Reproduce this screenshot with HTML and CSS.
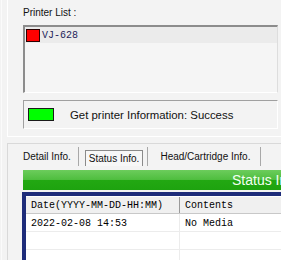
FILE: index.html
```html
<!DOCTYPE html>
<html>

<head>
    <title>Printer Status</title>
    <link rel="stylesheet" href="styles.css">
</head>

<body>
    <div class="window">
        <div class="printer-panel">
            <div class="panel-label">Printer List :</div>
            <div class="printer-list">
                <div class="printer-item">
                    <span class="swatch red"></span>
                    <span class="printer-name">VJ-628</span>
                </div>
            </div>
            <div class="status-box">
                <span class="swatch green"></span>
                <span class="status-text">Get printer Information: Success</span>
            </div>
        </div>

        <div class="info-panel">
            <div class="tabs">
                <div class="tab first">Detail Info.</div>
                <div class="tab-sep"></div>
                <div class="tab active">Status Info.</div>
                <div class="tab-sep"></div>
                <div class="tab">Head/Cartridge Info.</div>
                <div class="tab-sep"></div>
            </div>
            <div class="banner">Status Information</div>
            <div class="log-frame">
                <table class="log-table">
                    <tr>
                        <th class="col-date">Date(YYYY-MM-DD-HH:MM)</th>
                        <th>Contents</th>
                    </tr>
                    <tr>
                        <td>2022-02-08 14:53</td>
                        <td>No Media</td>
                    </tr>
                    <tr>
                        <td></td>
                        <td></td>
                    </tr>
                    <tr>
                        <td></td>
                        <td></td>
                    </tr>
                </table>
            </div>
        </div>
    </div>
</body>

</html>
```

FILE: styles.css
```css
body {
    margin: 0;
    padding: 0;
    background: #f3f3f3;
    font-family: "Liberation Sans", Arial, sans-serif;
    color: #000;
    overflow: hidden;
}

.window {
    width: 281px;
    height: 260px;
    overflow: hidden;
    border-left: 1px solid #fbfbfb;
    margin-left: 1px;
    box-sizing: border-box;
}

.printer-panel {
    margin-left: 5px;
    padding: 6px 0 7px 15px;
    border-left: 1px solid #ffffff;
    border-bottom: 1px solid #ffffff;
}

.panel-label {
    font-size: 10px;
    line-height: 13px;
    height: 13px;
    margin-bottom: 6px;
    color: #111;
}

.printer-list {
    width: 255px;
    height: 68px;
    box-sizing: border-box;
    background: #f5f5f5;
    border-top: 2px solid #8c8c8c;
    border-left: 2px solid #8c8c8c;
    border-right: 1px solid #dddddd;
    border-bottom: 1px solid #ffffff;
}

.printer-item {
    display: flex;
    align-items: center;
    height: 16px;
    background: #ebebeb;
}

.swatch {
    display: inline-block;
    box-sizing: border-box;
    border: 1px solid #2a0000;
}

.swatch.red {
    width: 14px;
    height: 13px;
    margin-left: 1px;
    background: #ff0000;
}

.printer-name {
    margin-left: 2px;
    font-family: "Liberation Mono", monospace;
    font-size: 10px;
    color: #1e1e5a;
}

.status-box {
    display: flex;
    align-items: center;
    width: 255px;
    height: 29px;
    margin-top: 7px;
    box-sizing: border-box;
    padding-left: 4px;
    border-top: 1px solid #a0a0a0;
    border-left: 1px solid #a0a0a0;
    border-right: 1px solid #ffffff;
    border-bottom: 1px solid #ffffff;
}

.swatch.green {
    width: 26px;
    height: 13px;
    border-color: #1a1a1a;
    background: #00ff00;
}

.status-text {
    margin-left: 16px;
    font-size: 11.4px;
    color: #111;
}

.info-panel {
    margin-top: 6px;
    margin-left: 5px;
    padding: 3px 0 0 15px;
    border-top: 1px solid #d9d9d9;
    border-left: 1px solid #d9d9d9;
    width: 420px;
}

.tabs {
    display: flex;
    align-items: stretch;
    height: 19px;
    font-size: 10px;
}

.tab {
    display: flex;
    align-items: center;
    padding: 0 3px;
    color: #111;
}

.tab.first {
    padding-left: 0;
    margin-right: 4px;
}

.tab.active {
    margin: 3px 4px 0 6px;
    border: 1px solid #8a8a8a;
    border-bottom: none;
    background: #f7f7f7;
}

.tab-sep {
    width: 1px;
    background: #a8a8a8;
}

.tab-sep + .tab:not(.active) {
    margin-left: 9px;
    margin-right: 7px;
}

.banner {
    height: 20px;
    margin-top: 4px;
    padding-left: 209px;
    background: linear-gradient(#6ccc5c, #4fbe3f 48%, #22a812 52%, #1ea30f);
    color: #f4fff2;
    font-size: 14px;
    line-height: 20px;
}

.log-frame {
    margin-top: 2px;
    margin-left: -1px;
    border: 4px solid #1e2c7a;
    background: #ffffff;
    height: 80px;
}

.log-table {
    border-collapse: collapse;
    width: 100%;
    font-family: "Liberation Mono", monospace;
    font-size: 10px;
    margin-top: 1px;
}

.log-table th {
    height: 15px;
    padding: 1px 0 0 5px;
    text-align: left;
    font-weight: normal;
    background: #f0f0f0;
    border-bottom: 1px solid #c8c8c8;
    border-right: 1px solid #9a9a9a;
}

.log-table th.col-date {
    width: 148px;
}

.log-table td {
    height: 15px;
    padding: 2px 0 0 5px;
    border-bottom: 1px solid #ececec;
    border-right: 1px solid #ececec;
}
```
